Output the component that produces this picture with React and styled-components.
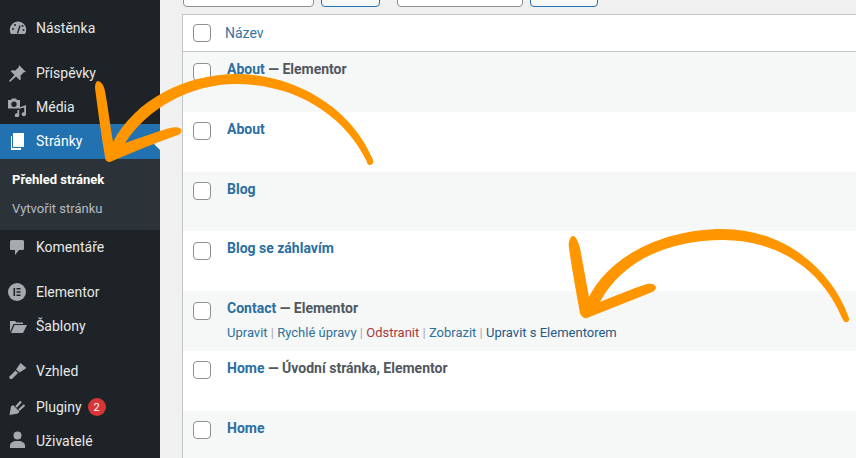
import React from 'react';
import styled, { createGlobalStyle } from 'styled-components';

const Global = createGlobalStyle`
    html, body {
        margin: 0;
        height: 458px;
        overflow: hidden;
        background: #f0f0f1;
        font-family: Roboto, "Liberation Sans", sans-serif;
    }
`;

const Page = styled.div`
    position: relative;
    display: flex;
    width: 856px;
    height: 458px;
    overflow: hidden;
`;
const Sidebar = styled.nav`
    flex: 0 0 160px;
    padding-top: 11px;
    box-sizing: border-box;
    background: #1d2327;
`;
const MenuItem = styled.div`
    position: relative;
    display: flex;
    align-items: center;
    box-sizing: border-box;
    height: ${(p) => (p.$active ? 35 : 34)}px;
    padding-bottom: ${(p) => (p.$active ? 1 : 0)}px;
    margin-top: ${(p) => p.$gap || 0}px;
    font-size: 14px;
    color: ${(p) => (p.$active ? '#fff' : '#e6e8e9')};
    background: ${(p) => (p.$active ? '#2271b1' : 'transparent')};
    &::after {
        content: '';
        display: ${(p) => (p.$active ? 'block' : 'none')};
        position: absolute;
        right: 0;
        top: 50%;
        margin-top: -8px;
        border: 8px solid transparent;
        border-right-color: #f0f0f1;
    }
`;
const IconSlot = styled.span`
    flex: 0 0 36px;
    display: flex;
    justify-content: center;
    padding-right: 2px;
    box-sizing: border-box;
    color: ${(p) => (p.$active ? '#fff' : '#a7aaad')};
`;
const Badge = styled.span`
    display: inline-flex;
    align-items: center;
    justify-content: center;
    width: 18px;
    height: 18px;
    margin-left: 6px;
    border-radius: 50%;
    background: #d63638;
    color: #fff;
    font-size: 11px;
`;
const SubMenu = styled.div`
    height: 71px;
    padding-top: 6px;
    box-sizing: border-box;
    background: #2c3338;
`;
const SubItem = styled.div`
    height: 29px;
    line-height: 29px;
    padding-left: 12px;
    font-size: 13px;
    font-weight: ${(p) => (p.$active ? 700 : 400)};
    color: ${(p) => (p.$active ? '#fff' : 'rgba(240, 246, 252, 0.7)')};
`;

const Main = styled.main`
    flex: 1;
    min-width: 0;
    padding-left: 22px;
`;
const Toolbar = styled.div`
    display: flex;
    align-items: flex-end;
    height: 7px;
    margin-bottom: 7px;
    padding-left: 1px;
`;
const Control = styled.div`
    flex: 0 0 ${(p) => p.$width}px;
    height: 30px;
    margin-right: ${(p) => p.$space}px;
    box-sizing: border-box;
    border-radius: 4px;
    border: 1px solid ${(p) => (p.$button ? '#2271b1' : '#8c8f94')};
    background: ${(p) => (p.$button ? '#f6f7f7' : '#fff')};
`;
const Table = styled.div`
    width: 700px;
    background: #fff;
    border: 1px solid #c3c4c7;
    border-right: 0;
    border-bottom: 0;
`;
const Header = styled.div`
    display: flex;
    align-items: center;
    height: 36px;
    padding-left: 10px;
    border-bottom: 1px solid #c3c4c7;
    background: #fff;
    font-size: 14px;
    color: #35759f;
`;
const Check = styled.span`
    flex: 0 0 16px;
    height: 16px;
    border: 1px solid #8c8f94;
    border-radius: 4px;
    background: #fff;
`;
const HeaderLabel = styled.span`
    margin-left: 14px;
`;
const Row = styled.div`
    display: flex;
    align-items: flex-start;
    height: 59.75px;
    padding: 10.5px 0 0 10px;
    box-sizing: border-box;
    background: ${(p) => (p.$alt ? '#f6f7f7' : '#fff')};
`;
const RowBody = styled.div`
    margin: -0.5px 0 0 16px;
`;
const Title = styled.div`
    height: 14px;
    line-height: 14px;
    margin-bottom: 10px;
    font-size: 14px;
    font-weight: 700;
    color: #50575e;
    white-space: nowrap;
`;
const TitleLink = styled.span`
    color: #2a6f9f;
`;
const Actions = styled.div`
    font-size: 13px;
    line-height: 16px;
    color: #a7aaad;
    white-space: nowrap;
`;
const Action = styled.span`
    color: ${(p) => p.$color || '#2f7199'};
`;
const Overlay = styled.svg`
    position: absolute;
    inset: 0;
    pointer-events: none;
`;

const Icon = styled.svg.attrs({ width: 20, height: 20, viewBox: '0 0 20 20', fill: 'currentColor' })`
    display: block;
`;

const DashboardIcon = () => (
    <Icon>
        <path d="M4 16A8.2 8.2 0 1 1 18 16Z" />
        <path d="M10.5 15.5L13 7.5" stroke="#1d2327" strokeWidth="1.4" />
        <circle cx="6" cy="11" r="1" fill="#1d2327" />
        <circle cx="8" cy="7" r="1" fill="#1d2327" />
        <circle cx="15.5" cy="8" r="1" fill="#1d2327" />
        <circle cx="16.5" cy="12" r="1" fill="#1d2327" />
    </Icon>
);
const PinIcon = () => (
    <Icon>
        <path d="M12 2L19 9L16.8 9.3L13.5 12.7L13.8 16.3L12.8 17.3L9 13.5L3 19L2 18L7.5 12L3.7 8.2L4.7 7.2L8.3 7.5L11.7 4.2Z" />
    </Icon>
);
const MediaIcon = () => (
    <Icon>
        <path fillRule="evenodd" d="M1 3h3l1-1.5h4L10 3h3v8.5H1z M7 4.5a2.7 2.7 0 1 0 0 5.4a2.7 2.7 0 0 0 0-5.4z" />
        <path d="M19 8v9.2a2.2 2 0 1 1-1.8-2V10.5l-5 1.2v6.6a2.2 2 0 1 1-1.8-2V13h1.8v-2.6z" />
    </Icon>
);
const PagesIcon = () => (
    <Icon>
        <path d="M6 2h11v14H6z" />
        <path d="M4 5h1v12h9v2H4z" />
    </Icon>
);
const CommentIcon = () => (
    <Icon>
        <path d="M3 4.5Q3 3 4.5 3H15.5Q17 3 17 4.5V12Q17 13 15.5 13H12L8 18V13H4.5Q3 13 3 12Z" />
    </Icon>
);
const ElementorIcon = () => (
    <Icon>
        <circle cx="10" cy="10" r="9" />
        <path d="M6.5 6h1.6v8H6.5z M9.5 6h4v1.6h-4z M9.5 9.2h4v1.6h-4z M9.5 12.4h4V14h-4z" fill="#1d2327" />
    </Icon>
);
const FolderIcon = () => (
    <Icon>
        <path d="M3 16V5h5l1.5 1.5H16V8H6.5z" />
        <path d="M4 17L7.5 9H20L16 17z" />
    </Icon>
);
const BrushIcon = () => (
    <Icon>
        <path d="M3 18L2 16L8.5 9.5L11 12L5 18Z" />
        <path d="M9 8.5L13.5 2L19.5 7L12.5 11.5Z" />
    </Icon>
);
const PlugIcon = () => (
    <Icon>
        <path d="M2.5 18L4 9.5L6 8L12.5 14.5L11 16.5Z" />
        <path d="M9 10L14 4.5M12 13L17.5 8" stroke="currentColor" strokeWidth="2.2" />
    </Icon>
);
const UserIcon = () => (
    <Icon>
        <circle cx="10.5" cy="4.5" r="4" />
        <path d="M3 17v-2.5C3 12 6 10.5 8 10h5c2 .5 5 2 5 4.5V17z" />
    </Icon>
);

const rows = [
    { link: 'About', state: ' — Elementor' },
    { link: 'About' },
    { link: 'Blog' },
    { link: 'Blog se záhlavím' },
    { link: 'Contact', state: ' — Elementor', hover: true },
    { link: 'Home', state: ' — Úvodní stránka, Elementor' },
    { link: 'Home' },
];

const App = () => {
    return (
        <Page>
            <Global />
            <Sidebar>
                <MenuItem><IconSlot><DashboardIcon /></IconSlot>Nástěnka</MenuItem>
                <MenuItem $gap={11}><IconSlot><PinIcon /></IconSlot>Příspěvky</MenuItem>
                <MenuItem><IconSlot><MediaIcon /></IconSlot>Média</MenuItem>
                <MenuItem $active><IconSlot $active><PagesIcon /></IconSlot>Stránky</MenuItem>
                <SubMenu>
                    <SubItem $active>Přehled stránek</SubItem>
                    <SubItem>Vytvořit stránku</SubItem>
                </SubMenu>
                <MenuItem><IconSlot><CommentIcon /></IconSlot>Komentáře</MenuItem>
                <MenuItem $gap={11}><IconSlot><ElementorIcon /></IconSlot>Elementor</MenuItem>
                <MenuItem><IconSlot><FolderIcon /></IconSlot>Šablony</MenuItem>
                <MenuItem $gap={11}><IconSlot><BrushIcon /></IconSlot>Vzhled</MenuItem>
                <MenuItem $gap={2}><IconSlot><PlugIcon /></IconSlot>Pluginy<Badge>2</Badge></MenuItem>
                <MenuItem><IconSlot><UserIcon /></IconSlot>Uživatelé</MenuItem>
            </Sidebar>
            <Main>
                <Toolbar>
                    <Control $width={131} $space={7} />
                    <Control $width={59} $space={17} $button />
                    <Control $width={126} $space={7} />
                    <Control $width={68} $space={0} $button />
                </Toolbar>
                <Table>
                    <Header>
                        <Check />
                        <HeaderLabel>Název</HeaderLabel>
                    </Header>
                    {rows.map((row, i) => (
                        <Row key={i} $alt={i % 2 === 0}>
                            <Check />
                            <RowBody>
                                <Title>
                                    <TitleLink>{row.link}</TitleLink>{row.state}
                                </Title>
                                {row.hover && (
                                    <Actions>
                                        <Action>Upravit</Action> | <Action>Rychlé úpravy</Action> | <Action $color="#a83a3c">Odstranit</Action> | <Action>Zobrazit</Action> | <Action $color="#1f5a87">Upravit s Elementorem</Action>
                                    </Actions>
                                )}
                            </RowBody>
                        </Row>
                    ))}
                </Table>
            </Main>
            <Overlay width="856" height="458" viewBox="0 0 856 458" fill="#ff9600">
                <path d="M98 81C102 82 104 86 105 91C108 107 110 125 113 142C135 100 185 74 237 74C295 74 352 108 373 160C374 163 372 165 370 165C368 165 367 164 367 162C345 115 295 84 237 84C190 84 148 108 125 143C140 138 155 132 170 128C174 127 179 127 181 129C182 132 181 134 178 135C155 143 133 152 110 162C107 162 105 160 105 157C101 134 98 111 95 88C95 84 96 81 98 81Z" />
                <path d="M573 236C576 236 578 241 580 248C583 264 586 281 589 297C610 255 665 229 723 229C780 229 830 265 849 318C850 321 847 323 845 322C843 321 843 319 842 318C822 270 778 240 723 240C670 240 622 260 600 302C615 296 631 289 647 284C651 283 655 284 656 287C656 290 653 292 650 293C629 301 608 310 587 318C584 319 581 316 580 313C576 291 572 270 569 248C568 243 570 236 573 236Z" />
            </Overlay>
        </Page>
    );
};

export default App;
